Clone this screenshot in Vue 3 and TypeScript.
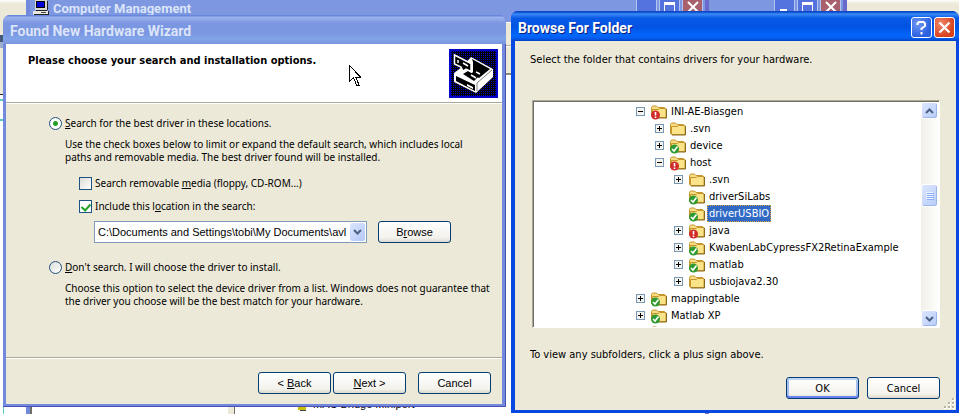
<script setup lang="ts">
import { ref } from 'vue'

type Badge = 'none' | 'ok' | 'mod'
interface Folder {
  name: string
  level: number
  sign: '' | '+' | '-'
  badge: Badge
}

const folders: Folder[] = [
  { name: 'INI-AE-Biasgen', level: 0, sign: '-', badge: 'mod' },
  { name: '.svn', level: 1, sign: '+', badge: 'none' },
  { name: 'device', level: 1, sign: '+', badge: 'ok' },
  { name: 'host', level: 1, sign: '-', badge: 'mod' },
  { name: '.svn', level: 2, sign: '+', badge: 'none' },
  { name: 'driverSiLabs', level: 2, sign: '', badge: 'ok' },
  { name: 'driverUSBIO', level: 2, sign: '', badge: 'ok' },
  { name: 'java', level: 2, sign: '+', badge: 'mod' },
  { name: 'KwabenLabCypressFX2RetinaExample', level: 2, sign: '+', badge: 'ok' },
  { name: 'matlab', level: 2, sign: '+', badge: 'ok' },
  { name: 'usbiojava2.30', level: 2, sign: '+', badge: 'none' },
  { name: 'mappingtable', level: 0, sign: '+', badge: 'ok' },
  { name: 'Matlab XP', level: 0, sign: '+', badge: 'ok' },
  { name: '', level: 0, sign: '', badge: 'ok' },
]

const mode = ref('search')
const media = ref(false)
const include = ref(true)
const path = 'C:\\Documents and Settings\\tobi\\My Documents\\avl'
const location = ref(path)
const selected = ref(6)
</script>

<template>
  <div class="desktop">
    <div class="far-edge">
      <i class="f-top"></i><i class="f-slate"></i><i class="f-steel"></i><i class="f-tools"></i><i class="f-cyan"></i><i class="f-cyan2"></i><i class="f-page"></i>
    </div>

    <div class="back-window rear">
      <span class="dim-btn"><svg width="20" height="20"><rect x="5" y="17" width="7" height="3" fill="#fff" /></svg></span>
      <span class="dim-btn"><svg width="20" height="20"><path d="M4.500 11v12M14.500 11v12" stroke="#fff" /><rect x="4" y="10" width="11" height="3" fill="#fff" /></svg></span>
      <span class="dim-btn red"><svg width="20" height="20"><path d="M5 10l10 10M15 10L5 20" stroke="#fff" stroke-width="2" /></svg></span>
    </div>

    <section class="back-window management">
      <header class="m-title">
        <svg class="pc" width="16" height="16" shape-rendering="crispEdges">
          <rect x="2" y="0" width="12" height="10" fill="#d8d8d0" />
          <rect x="3" y="1" width="9" height="7" fill="#000" />
          <rect x="4" y="2" width="7" height="5" fill="#0000d8" />
          <rect x="0" y="11" width="15" height="4" fill="#e8e8e0" />
          <path d="M14 1h1v9h-1zM3 10h11v1H3zM1 14h14v1H1zM15 11h1v4h-1z" fill="#222" />
          <rect x="8" y="12" width="5" height="1" fill="#444" />
        </svg>
        <span class="m-name">Computer Management</span>
        <span class="dim-btn"></span>
        <span class="dim-btn"><svg width="20" height="20"><path d="M4.500 11v12M14.500 11v12" stroke="#fff" /><rect x="4" y="10" width="11" height="3" fill="#fff" /></svg></span>
        <span class="dim-btn red"><svg width="20" height="20"><path d="M5 10l10 10M15 10L5 20" stroke="#fff" stroke-width="2" /></svg></span>
      </header>
      <div class="m-bar"></div>
      <div class="m-bar tall"></div>
      <div class="m-body">
        <div class="m-tree"></div>
        <div class="m-list">
          <div class="m-item">
            <svg width="16" height="16" shape-rendering="crispEdges">
              <rect x="1" y="9" width="9" height="2" fill="#333" />
              <rect x="6" y="10" width="8" height="4" fill="#c8c000" />
              <rect x="8" y="14" width="6" height="1" fill="#444" />
            </svg>
            MAC Bridge Miniport
          </div>
        </div>
      </div>
    </section>

    <main class="front">
      <section class="wizard">
        <header class="w-title">Found New Hardware Wizard</header>
        <div class="w-client">
          <div class="w-head">
            <h1>Please choose your search and installation options.</h1>
            <svg class="hw" width="49" height="49" viewBox="0 0 49 49">
              <defs>
                <pattern id="dots" width="2" height="2" patternUnits="userSpaceOnUse">
                  <rect width="2" height="2" fill="#000" />
                  <rect width="1" height="1" fill="#0000c8" />
                </pattern>
              </defs>
              <rect width="49" height="49" fill="#0000c8" />
              <rect x="2" y="2" width="45" height="45" fill="url(#dots)" shape-rendering="crispEdges" />
              <path d="M22 8l22 12v8L27 44 5 33v-9l8-6z" fill="#fff" />
              <path d="M23 10l18 10-11 9-8-4 2-2V13z" fill="#000" />
              <path d="M14 25l5-3 10 6-4 4z" fill="#000" />
              <path d="M22 26l5 3M27 23l4 2" stroke="#fff" stroke-width="1.500" />
              <path d="M7 27l19 9v6L7 32z" fill="#000" />
              <path d="M18 35l6 3v2l-6-3z" fill="#fff" />
              <path d="M5.500 6l16.500 8.500v8L17 20l-3 2-2-4-6.500-3z" fill="#000" stroke="#fff" stroke-width="1.500" />
              <path d="M9 11v3M14 14l5 3" stroke="#fff" stroke-width="1.500" />
              <path d="M43 21L28 34v8" fill="none" stroke="#000" stroke-width=".5" />
            </svg>
          </div>
          <div class="w-body">
            <label class="opt"><input v-model="mode" type="radio" name="mode" value="search" /><span><u>S</u>earch for the best driver in these locations.</span></label>
            <p class="note">Use the check boxes below to limit or expand the default search, which includes local<br />paths and removable media. The best driver found will be installed.</p>
            <div class="subs">
              <label class="opt"><input v-model="media" type="checkbox" /><span>Search removable <u>m</u>edia (floppy, CD-ROM...)</span></label>
              <label class="opt"><input v-model="include" type="checkbox" /><span>Include this l<u>o</u>cation in the search:</span></label>
              <div class="pick">
                <div class="combo">
                  <select v-model="location" aria-label="Location">
                    <option :value="path">{{ path }}</option>
                  </select>
                  <span class="drop"><svg width="9" height="6"><path d="M1 1l3.500 3.500L8 1" fill="none" stroke="#4d6185" stroke-width="2" /></svg></span>
                </div>
                <button type="button" class="btn">B<u>r</u>owse</button>
              </div>
            </div>
            <label class="opt"><input v-model="mode" type="radio" name="mode" value="manual" /><span><u>D</u>on't search. I will choose the driver to install.</span></label>
            <p class="note">Choose this option to select the device driver from a list. Windows does not guarantee that<br />the driver you choose will be the best match for your hardware.</p>
          </div>
          <footer class="w-foot">
            <button type="button" class="btn">&lt; <u>B</u>ack</button>
            <button type="button" class="btn"><u>N</u>ext &gt;</button>
            <button type="button" class="btn apart">Cancel</button>
          </footer>
        </div>
        <svg class="pointer" width="12" height="21" viewBox="0 0 12 21" shape-rendering="crispEdges">
          <path d="M.5.500v16l4-4 3 7.500h2.500l-3-7.500h5z" fill="#fff" stroke="#000" />
        </svg>
      </section>

      <section class="browse">
        <header class="b-title">
          <span class="b-name">Browse For Folder</span>
          <button type="button" class="cap" aria-label="Help"><svg width="19" height="19"><path d="M5.500 7V5.500L7 4h4.500L13 5.500V8l-3.500 2.500V12M9.500 14v2.500" fill="none" stroke="#fff" stroke-width="2" /></svg></button>
          <button type="button" class="cap red" aria-label="Close"><svg width="19" height="19"><path d="M4.500 4.500l10 10M14.500 4.500l-10 10" stroke="#fff" stroke-width="2.200" /></svg></button>
        </header>
        <div class="b-client">
          <p class="b-text">Select the folder that contains drivers for your hardware.</p>
          <div class="tree">
            <ul class="rows">
              <li v-for="(f, i) in folders" :key="i" :class="['row', 'lv' + f.level]" @click="selected = i">
                <svg class="sign" width="9" height="9" shape-rendering="crispEdges">
                  <template v-if="f.sign">
                    <rect x=".5" y=".5" width="8" height="8" fill="#f4f3ee" stroke="#7898b5" />
                    <path :d="f.sign === '+' ? 'M2 4h5v1H2zM4 2h1v5H4z' : 'M2 4h5v1H2z'" fill="#000" />
                  </template>
                </svg>
                <svg class="folder" width="16" height="16" viewBox="0 0 16 16">
                  <path d="M.5 12.500V3.500l1-1.500h4l1.500 1.500h6.500v9z" fill="#f7dc83" stroke="#c5962c" />
                  <path d="M1.500 13.500V5.500h6l1-1h6.500v9z" fill="#fbe38a" stroke="#c5962c" />
                  <path d="M15.500 5v9H2" fill="none" stroke="#8a6a1c" />
                  <template v-if="f.badge === 'ok'">
                    <circle cx="4.500" cy="11" r="4.500" fill="#2f9a2f" />
                    <path d="M2 11l2 2 3.500-4.500" fill="none" stroke="#fff" stroke-width="1.600" />
                  </template>
                  <template v-else-if="f.badge === 'mod'">
                    <circle cx="4.500" cy="11" r="4.500" fill="#d02c2c" />
                    <path d="M4.500 8v3.500M4.500 12.500v1.500" stroke="#fff" stroke-width="1.600" />
                  </template>
                </svg>
                <span :class="['name', { on: i === selected }]">{{ f.name }}</span>
              </li>
            </ul>
            <div class="scroll">
              <span class="sb"><svg width="9" height="6"><path d="M1 5l3.500-3.500L8 5" fill="none" stroke="#4d6185" stroke-width="2" /></svg></span>
              <span class="track"></span>
              <span class="sb thumb"><svg width="8" height="8" shape-rendering="crispEdges"><path d="M0 0h7v1H0zM0 2h7v1H0zM0 4h7v1H0zM0 6h7v1H0z" fill="#eef4fe" /><path d="M1 1h7v1H1zM1 3h7v1H1zM1 5h7v1H1zM1 7h7v1H1z" fill="#8cb0f8" /></svg></span>
              <span class="track low"></span>
              <span class="sb"><svg width="9" height="6"><path d="M1 1l3.500 3.500L8 1" fill="none" stroke="#4d6185" stroke-width="2" /></svg></span>
            </div>
          </div>
          <p class="b-text">To view any subfolders, click a plus sign above.</p>
          <footer class="b-foot">
            <button type="button" class="btn default">OK</button>
            <button type="button" class="btn">Cancel</button>
          </footer>
          <svg class="grip" width="11" height="11" shape-rendering="crispEdges"><path d="M8 0h3v3H8zM4 4h3v3H4zM8 4h3v3H8zM0 8h3v3H0zM4 8h3v3H4zM8 8h3v3H8z" fill="#fff" /><path d="M8 0h2v2H8zM4 4h2v2H4zM8 4h2v2H8zM0 8h2v2H0zM4 8h2v2H4zM8 8h2v2H8z" fill="#b8b4a2" /></svg>
        </div>
      </section>
    </main>
  </div>
</template>

<style>
body {
  margin: 0;
}
</style>

<style scoped>
.desktop {
  position: relative;
  min-height: 100vh;
  overflow: hidden;
  background: #fff;
  color: #000;
  font: 11px/13px "Liberation Sans", Arial, sans-serif;
}
.desktop * {
  box-sizing: border-box;
}
h1,
p,
ul {
  margin: 0;
  padding: 0;
}
svg {
  display: block;
  flex: none;
}

.far-edge {
  position: absolute;
  inset: 0;
  display: flex;
  flex-direction: column;
}
.f-top {
  height: 35px;
  background: linear-gradient(#fdfdf9, #ece9d8 4px);
}
.f-slate {
  height: 7px;
  background: #47597a;
}
.f-steel {
  height: 6px;
  background: #9fafd0;
}
.f-tools {
  height: 47px;
  background: #ece9d8;
  border-bottom: 1px solid #222;
}
.f-cyan,
.f-cyan2 {
  height: 20px;
  border-top: 4px solid #fff;
  background: linear-gradient(#5cc8c8 2px, #fff 2px);
}
.f-page {
  flex: 1;
  margin-left: 3px;
  border-left: 1px solid #5cc8c8;
}

.back-window {
  position: absolute;
  background: linear-gradient(#7d97e0, #7b96df);
  border-right: 4px solid #6a6ccd;
}
.rear {
  left: 60px;
  right: 112px;
  top: -9px;
  height: 60px;
  display: flex;
  justify-content: flex-end;
  gap: 2px;
  padding: 0 2px;
}
.management {
  left: 26px;
  right: 250px;
  top: -9px;
  bottom: -1px;
  display: flex;
  flex-direction: column;
  border-left: 4px solid #7389de;
}
.m-title {
  display: flex;
  align-items: flex-start;
  gap: 2px;
  height: 31px;
  padding: 0 2px;
}
.pc {
  margin: 9px 2px 0 1px;
}
.m-name {
  flex: 1;
  padding-top: 9px;
  color: #dbe4fa;
  font: bold 13px/18px Roboto, sans-serif;
}
.dim-btn {
  width: 21px;
  height: 24px;
  border: 1px solid #b4c4f2;
  border-radius: 3px;
  background: #5573dc;
}
.dim-btn.red {
  background: #a8606c;
}
.m-bar {
  height: 24px;
  background: #ece9d8;
  border-top: 1px solid #fff;
  border-bottom: 1px solid #b5b2a2;
}
.m-bar.tall {
  height: 29px;
  border-bottom: 2px solid #8a887c;
}
.m-body {
  flex: 1;
  display: flex;
  background: #ece9d8;
}
.m-tree {
  width: 198px;
  background: #fff;
  border-left: 2px solid #716f64;
}
.m-list {
  flex: 1;
  margin-left: 6px;
  display: flex;
  flex-direction: column;
  justify-content: flex-end;
  background: #fff;
  border-left: 1px solid #716f64;
}
.m-item {
  display: flex;
  align-items: center;
  gap: 5px;
  padding: 0 0 3px 57px;
}

.front {
  position: relative;
  display: grid;
  grid-template-columns: minmax(0, 503fr) minmax(0, 448fr);
  column-gap: 5px;
  align-items: start;
  padding: 11px 0 0 3px;
}

.btn {
  width: 73px;
  height: 22px;
  padding: 0;
  border: 1px solid #003c74;
  border-radius: 3px;
  background: linear-gradient(#fff, #f3f2ec 80%, #dcd8cc);
  color: #000;
  font: inherit;
}

.wizard {
  position: relative;
  margin-top: 4px;
  padding: 0 4px 3px 3px;
  border-radius: 7px 7px 0 0;
  background: #7389de;
  box-shadow: inset -1px -1px #4a50b4;
}
.w-title {
  height: 29px;
  margin: 0 -4px 0 -3px;
  padding: 0 7px;
  border-radius: 7px 7px 0 0;
  background: linear-gradient(#6687dc 1px, #9db5ee 2px, #7c97e1 8px, #7b96e0 18px, #81a5e9 24px, #7a94de);
  color: #dbe4fa;
  font: bold 14px/32px Roboto, sans-serif;
}
.w-client {
  background: #ece9d8;
}
.w-head {
  display: flex;
  justify-content: space-between;
  height: 59px;
  padding: 5px 4px 0 22px;
  background: #fff;
  border-bottom: 1px solid #aca899;
}
.w-head h1 {
  padding-top: 5px;
  font: bold 11px/14px "DejaVu Sans Condensed", "DejaVu Sans", sans-serif;
}
.w-body {
  height: 254px;
  padding: 13px 0 0 43px;
  border-top: 1px solid #fff;
}
.opt {
  display: flex;
  align-items: center;
  gap: 3px;
  height: 13px;
}
.opt,
.note {
  font-family: "Noto Sans", "Open Sans", sans-serif;
  font-size: 10px;
}
.opt input {
  flex: none;
  appearance: none;
  width: 13px;
  height: 13px;
  margin: 0;
  border: 1px solid #1d5281;
  background: linear-gradient(135deg, #dcdcd7, #fff);
}
.opt input[type='radio'] {
  border-radius: 50%;
}
.opt input[type='radio']:checked {
  background: radial-gradient(circle, #22a022 2px, #fff 3px);
}
.opt input[type='checkbox']:checked {
  position: relative;
  background: #fff;
}
.opt input[type='checkbox']:checked::after {
  content: '';
  position: absolute;
  left: 3px;
  top: 1px;
  width: 4px;
  height: 7px;
  border: solid #21a121;
  border-width: 0 2px 2px 0;
  transform: rotate(42deg);
}
.note {
  padding: 8px 0 0 16px;
  white-space: nowrap;
}
.subs {
  display: flex;
  flex-direction: column;
  gap: 10px;
  padding: 13px 0 18px 30px;
}
.pick {
  display: flex;
  align-items: flex-start;
  gap: 11px;
  margin-top: -2px;
  padding-left: 15px;
}
.combo {
  position: relative;
  width: 273px;
}
.combo select {
  display: block;
  appearance: none;
  width: 100%;
  height: 22px;
  padding: 0 18px 0 3px;
  border: 1px solid #7f9db9;
  border-radius: 0;
  background: #fff;
  color: #000;
  font: inherit;
}
.drop {
  position: absolute;
  top: 2px;
  right: 2px;
  bottom: 2px;
  width: 15px;
  display: grid;
  place-items: center;
  border-radius: 2px;
  background: linear-gradient(135deg, #dbe5fe, #b4c8f6);
  pointer-events: none;
}
.w-foot {
  display: flex;
  justify-content: flex-end;
  gap: 2px;
  height: 47px;
  padding: 14px 11px 0 0;
  border-top: 1px solid #aca899;
  box-shadow: inset 0 1px #fff;
}
.w-foot .apart {
  margin-left: 10px;
}
.pointer {
  position: absolute;
  left: 346px;
  top: 50px;
}

.browse {
  padding: 0 3px 3px 4px;
  border-radius: 7px 7px 0 0;
  background: #0848e0;
  font-family: "DejaVu Sans Condensed", "DejaVu Sans", sans-serif;
}
.b-title {
  display: flex;
  align-items: center;
  gap: 2px;
  height: 30px;
  margin: 0 -3px 0 -4px;
  padding: 3px 4px 0 7px;
  border-radius: 7px 7px 0 0;
  background: linear-gradient(#0a48c8 1px, #3a8cf8 3px, #0a5ae6 7px, #0253e3 16px, #0366fb 24px, #0560f0 27px, #0040c8);
}
.b-name {
  flex: 1;
  color: #fff;
  font: bold 14px/18px Roboto, sans-serif;
  text-shadow: 1px 1px #0b1f80;
}
.cap {
  width: 21px;
  height: 21px;
  padding: 0;
  border: 1px solid #fff;
  border-radius: 3px;
  background: radial-gradient(circle at 30% 30%, #6f98f4, #2a5fe0 70%);
}
.cap.red {
  background: radial-gradient(circle at 30% 30%, #f0886c, #d8421c 70%);
}
.b-client {
  position: relative;
  padding: 12px 16px 11px 17px;
  background: #ece9d8;
}
.b-text {
  margin-left: -2px;
  line-height: 14px;
}
.tree {
  display: flex;
  height: 228px;
  margin: 33px 0 20px;
  overflow: hidden;
  border: 1px solid;
  border-color: #aca899 #fff #fff #aca899;
  background: #fff;
  box-shadow: inset 1px 1px #716f64;
}
.rows {
  flex: 1;
  padding: 2px 0 0 103px;
  list-style: none;
}
.row {
  display: flex;
  align-items: center;
  height: 17px;
}
.lv1 {
  padding-left: 19px;
}
.lv2 {
  padding-left: 38px;
}
.folder {
  margin: 0 2px 0 6px;
}
.name {
  padding: 0 2px;
  line-height: 17px;
  white-space: nowrap;
}
.name.on {
  background: #316ac5;
  color: #fff;
  outline: 1px dotted #e0a040;
  outline-offset: -1px;
}
.scroll {
  width: 17px;
  display: flex;
  flex-direction: column;
  margin: 1px 1px 0 0;
  background: linear-gradient(90deg, #f0efe8, #fefefb);
}
.sb {
  display: grid;
  place-items: center;
  height: 17px;
  border: 1px solid #fff;
  border-radius: 3px;
  background: linear-gradient(135deg, #dbe5fe, #b9cdf9);
  box-shadow: inset -1px -1px #9db6ea;
}
.thumb {
  height: 23px;
}
.track {
  flex: 65;
}
.track.low {
  flex: 102;
}
.b-foot {
  display: flex;
  justify-content: flex-end;
  gap: 8px;
  margin-top: 15px;
}
.default {
  box-shadow: inset 0 2px #bcd4f6, inset 0 -2px #6982ee, inset 2px 0 #a6bdf2, inset -2px 0 #a6bdf2;
}
.grip {
  position: absolute;
  right: 1px;
  bottom: 1px;
}
</style>
